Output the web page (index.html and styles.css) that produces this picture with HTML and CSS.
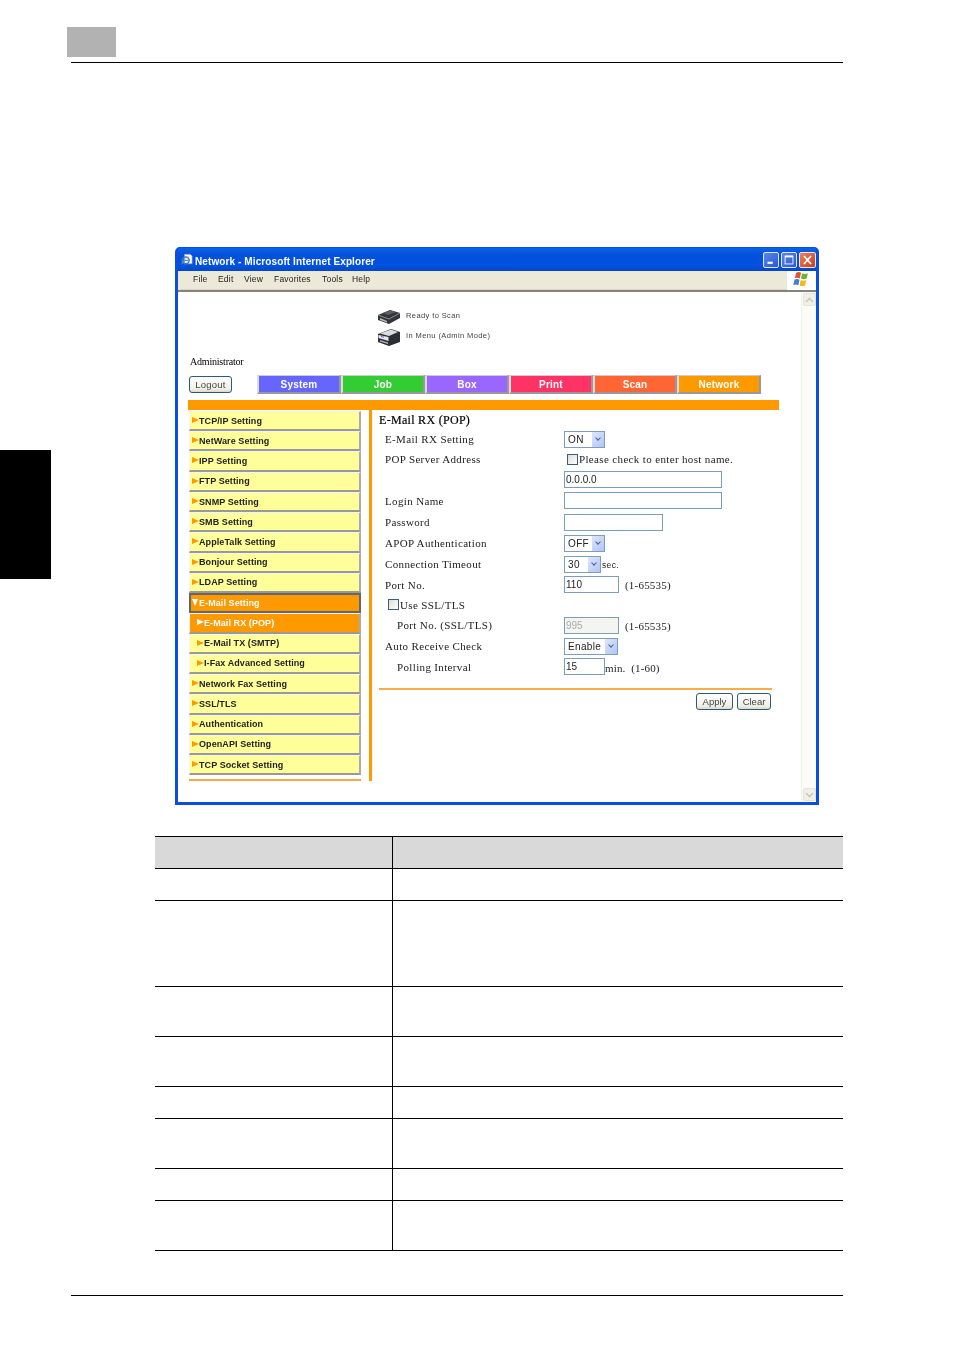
FILE: index.html
```html
<!DOCTYPE html>
<html lang="en">
<head>
  <meta charset="UTF-8">
  <title>E-Mail RX (POP)</title>
  <link rel="stylesheet" href="styles.css">
</head>
<body>

<header class="page-head">
  <div class="chapter-box"></div>
  <div class="rule"></div>
</header>

<div class="side-tab"></div>

<!-- Browser window -->
<div class="window">
  <div class="titlebar">
    <svg class="ie-icon" width="12" height="13" viewBox="0 0 14 14">
      <path d="M4 1h7l2 2v9H4z" fill="#fff" stroke="#8a96b0" stroke-width=".7"/>
      <circle cx="5.5" cy="8" r="4" fill="none" stroke="#2d7fd8" stroke-width="1.8"/>
      <path d="M2.5 8h6" stroke="#2d7fd8" stroke-width="1.2"/>
      <path d="M1 12c1-3 6-8 9-9" fill="none" stroke="#e8b030" stroke-width=".8"/>
    </svg>
    <span class="title-text">Network - Microsoft Internet Explorer</span>
    <div class="win-btns">
      <div class="win-btn"><svg width="16" height="16" viewBox="0 0 16 16"><rect x="4" y="10" width="6" height="2.4" fill="#fff"/></svg></div>
      <div class="win-btn"><svg width="16" height="16" viewBox="0 0 16 16"><rect x="3.5" y="3.5" width="9" height="9" fill="none" stroke="#fff"/><rect x="3.5" y="3" width="9" height="2" fill="#fff"/></svg></div>
      <div class="win-btn close"><svg width="17" height="16" viewBox="0 0 17 16"><path d="M4.5 3.5l8 9M12.5 3.5l-8 9" stroke="#fff" stroke-width="2"/></svg></div>
    </div>
  </div>

  <div class="menubar">
    <div class="menu-items">
      <span>File</span><span>Edit</span><span>View</span><span>Favorites</span><span>Tools</span><span>Help</span>
    </div>
    <div class="xp-logo">
      <svg width="17" height="16" viewBox="0 0 16 15">
        <path d="M3 1.5c2-1 3-.6 4.6.2L6.4 7C4.8 6.200 3.400 6 1.700 6.800z" fill="#e8502a"/>
        <path d="M8.700 2.100c1.700.8 3.200.8 5.300-.1L12.800 7c-2 .9-3.500.8-5.300 0z" fill="#6fb52c"/>
        <path d="M1.500 7.900c1.700-.8 3-.6 4.600.2L5 13.300c-1.700-.8-3-1-4.800-.2z" fill="#3a7fd8"/>
        <path d="M7.300 8.500c1.800.8 3.300.9 5.300 0l-1.200 5c-2 .9-3.500.8-5.300 0z" fill="#f2bb1d"/>
      </svg>
    </div>
  </div>

  <div class="viewport">
    <div class="content">
      <!-- Device status -->
      <div class="status">
        <div class="status-row">
          <svg width="24" height="18" viewBox="0 0 24 18">
            <path d="M1 7l12-5 10 3v5l-11 6-11-4z" fill="#33353a"/>
            <path d="M1 7l11 4 11-6" fill="none" stroke="#8b8e94"/>
            <path d="M3 10l7 3v1.500l-7-2.500z" fill="#b8bbc0"/>
            <path d="M6 5l8-2.500 5 1.500-8 3z" fill="#5b5e64"/>
          </svg>
          <span>Ready to Scan</span>
        </div>
        <div class="status-row">
          <svg width="24" height="18" viewBox="0 0 24 18">
            <path d="M1 6l13-5 9 3v10l-11 4-11-4z" fill="#2c2e33"/>
            <path d="M3 5.500l11-4 7 2.500-9 4z" fill="#d9dbdf"/>
            <path d="M1.500 7l10 2v4l-10-3z" fill="#e6e7ea"/>
            <path d="M4 8.500l3 .7" stroke="#5566dd" stroke-width="1"/>
            <path d="M3 12l8 2.500v1.500l-8-2.500z" fill="#aeb1b6"/>
          </svg>
          <span>In Menu (Admin Mode)</span>
        </div>
      </div>

      <div class="admin-label">Administrator</div>

      <nav class="nav-row">
        <button class="xp-btn logout">Logout</button>
        <div class="tabs">
          <div class="tab system">System</div>
          <div class="tab job">Job</div>
          <div class="tab box">Box</div>
          <div class="tab print">Print</div>
          <div class="tab scan">Scan</div>
          <div class="tab network">Network</div>
        </div>
      </nav>

      <div class="orange-bar"></div>

      <div class="columns">
        <aside class="sidebar">
          <div class="side-item">TCP/IP Setting</div>
          <div class="side-item">NetWare Setting</div>
          <div class="side-item">IPP Setting</div>
          <div class="side-item">FTP Setting</div>
          <div class="side-item">SNMP Setting</div>
          <div class="side-item">SMB Setting</div>
          <div class="side-item">AppleTalk Setting</div>
          <div class="side-item">Bonjour Setting</div>
          <div class="side-item">LDAP Setting</div>
          <div class="side-item open">E-Mail Setting</div>
          <div class="side-item sub current">E-Mail RX (POP)</div>
          <div class="side-item sub">E-Mail TX (SMTP)</div>
          <div class="side-item sub">I-Fax Advanced Setting</div>
          <div class="side-item">Network Fax Setting</div>
          <div class="side-item">SSL/TLS</div>
          <div class="side-item">Authentication</div>
          <div class="side-item">OpenAPI Setting</div>
          <div class="side-item">TCP Socket Setting</div>
          <div class="side-end"></div>
        </aside>

        <main class="panel">
          <h2>E-Mail RX (POP)</h2>
          <div class="form-grid">
            <label>E-Mail RX Setting</label>
            <div><div class="select w41">ON<span class="arrow"></span></div></div>

            <label>POP Server Address</label>
            <div class="check-line"><span class="check"></span>Please check to enter host name.</div>

            <label></label>
            <div><input class="w158" type="text" value="0.0.0.0"></div>

            <label class="low">Login Name</label>
            <div><input class="w158" type="text"></div>

            <label>Password</label>
            <div><input class="w99" type="text"></div>

            <label>APOP Authentication</label>
            <div><div class="select w41">OFF<span class="arrow"></span></div></div>

            <label>Connection Timeout</label>
            <div class="inline"><div class="select w37">30<span class="arrow"></span></div><span class="unit">sec.</span></div>

            <label class="low">Port No.</label>
            <div class="inline"><input class="w55" type="text" value="110"><span class="range">(1-65535)</span></div>

            <label class="ssl-label"><span class="check"></span>Use SSL/TLS</label>
            <div></div>

            <label class="indent">Port No. (SSL/TLS)</label>
            <div class="inline"><input class="w55 off" type="text" value="995"><span class="range">(1-65535)</span></div>

            <label>Auto Receive Check</label>
            <div><div class="select w54">Enable<span class="arrow"></span></div></div>

            <label class="indent low">Polling Interval</label>
            <div class="inline"><input class="w41" type="text" value="15"><span class="min">min.&nbsp; (1-60)</span></div>
          </div>
          <div class="panel-rule"></div>
          <div class="panel-btns">
            <button class="xp-btn apply">Apply</button>
            <button class="xp-btn clear">Clear</button>
          </div>
        </main>
      </div>
    </div>

    <div class="scrollbar">
      <div class="sb-btn"><svg width="9" height="6" viewBox="0 0 9 6"><path d="M1 5l3.500-3.500L8 5" fill="none" stroke="#c9c9bd" stroke-width="1.600"/></svg></div>
      <div class="sb-btn"><svg width="9" height="6" viewBox="0 0 9 6"><path d="M1 1l3.500 3.500L8 1" fill="none" stroke="#c9c9bd" stroke-width="1.600"/></svg></div>
    </div>
  </div>
</div>

<!-- Description table (cells empty in the source) -->
<table class="desc">
  <tr class="h32 head"><td></td><td></td></tr>
  <tr class="h32"><td></td><td></td></tr>
  <tr class="h86"><td></td><td></td></tr>
  <tr class="h50"><td></td><td></td></tr>
  <tr class="h50"><td></td><td></td></tr>
  <tr class="h32"><td></td><td></td></tr>
  <tr class="h50"><td></td><td></td></tr>
  <tr class="h32"><td></td><td></td></tr>
  <tr class="h50"><td></td><td></td></tr>
</table>

<div class="foot-rule"></div>

</body>
</html>
```

FILE: styles.css
```css
body { margin: 0; background: #fff; font-family: "Liberation Sans", Arial, sans-serif; color: #000; }

/* page furniture */
.page-head { padding-top: 27px; }
.chapter-box { width: 49px; height: 30px; margin-left: 67px; background: #b2b2b2; }
.rule { height: 1px; margin: 5px 111px 0 71px; background: #000; }
.foot-rule { height: 1px; margin: 44px 111px 0 71px; background: #000; }
.side-tab { position: absolute; left: 0; top: 450px; width: 51px; height: 129px; background: #000; }

/* browser window */
.window { width: 644px; height: 558px; margin: 184px 0 0 175px; box-sizing: border-box; background: #0a50e0; border: solid #0a4fe0; border-width: 1px 3px 3px; border-radius: 5px 5px 0 0; display: flex; flex-direction: column; filter: blur(0.35px); }
.titlebar { height: 23px; display: flex; align-items: center; padding-left: 3px; background: linear-gradient(#0a62ea, #0450dc 30%, #0052e0 75%, #0347c8); }
.ie-icon { flex: none; margin-right: 2px; }
.title-text { margin: 4px 0 0 0; color: #fff; font-weight: bold; font-size: 10px; letter-spacing: 0.1px; }
.win-btns { margin-left: auto; display: flex; gap: 2px; }
.win-btn { width: 16px; height: 16px; box-sizing: border-box; border: 1px solid #dfe8fb; border-radius: 2px; background: linear-gradient(135deg, #5c87ea, #2a56d8); display: flex; align-items: center; justify-content: center; overflow: hidden; }
.win-btn.close { width: 17px; background: linear-gradient(135deg, #e8835e, #c9401a); }

.menubar { height: 19px; flex: none; padding-left: 2px; display: flex; background: #ece9d8; border-bottom: 2px solid #85837a; }
.menu-items { flex: 1; display: flex; align-items: center; font-size: 8.5px; letter-spacing: 0.2px; color: #222; padding: 0 0 2px 13px; border-bottom: 1px solid #d8d4c0; }
.menu-items span:nth-child(1) { width: 25px; }
.menu-items span:nth-child(2) { width: 26px; }
.menu-items span:nth-child(3) { width: 30px; }
.menu-items span:nth-child(4) { width: 48px; }
.menu-items span:nth-child(5) { width: 30px; }
.xp-logo { width: 29px; background: #fff; display: flex; justify-content: center; }

.viewport { flex: 1; display: flex; background: #fff; min-height: 0; padding-left: 1px; }
.content { flex: 1; }
.scrollbar { width: 15px; background: #fbfbf7; border-left: 1px solid #f2f2ec; display: flex; flex-direction: column; justify-content: space-between; padding: 1px 0; box-sizing: border-box; }
.sb-btn { height: 13px; width: 13px; margin-left: 1px; box-sizing: border-box; background: #f1f0e6; border: 1px solid #e4e3d8; border-radius: 2px; display: flex; align-items: center; justify-content: center; }

/* status block */
.status { margin-left: 198px; padding-top: 13px; }
.status-row { height: 20px; display: flex; align-items: center; gap: 5px; font-size: 7.5px; letter-spacing: 0.4px; color: #444; }
.status-row svg { margin-top: 4px; }
.admin-label { margin: 10px 0 0 11px; height: 13px; line-height: 13px; font-family: "Liberation Serif", serif; font-size: 10px; letter-spacing: -0.2px; }

.nav-row { margin: 7px 0 0 10px; height: 19px; display: flex; }
.xp-btn { padding: 0; box-sizing: border-box; font-family: "Liberation Sans", Arial, sans-serif; font-size: 9.5px; color: #444; background: linear-gradient(#fff, #f0efe6 80%, #dcd8c8); border: 1px solid #2d5a78; border-radius: 3px; }
.logout { width: 43px; height: 17px; margin-top: 1px; letter-spacing: 0.2px; }
.tabs { margin-left: 25px; display: flex; }
.tab { width: 84px; box-sizing: border-box; border: solid; border-width: 1px 2px 2px 2px; border-color: #ccc #999 #999 #ddd; color: #fff; font-weight: bold; font-size: 10px; letter-spacing: 0.2px; display: flex; align-items: center; justify-content: center; }
.system { background: #6666ff; }
.job { background: #33cc33; }
.box { background: #9966ff; }
.print { background: #ff3366; }
.scan { background: #ff6633; }
.network { background: #ff9900; }

.orange-bar { height: 10px; width: 591px; margin: 6px 0 0 9px; background: #ff9900; }

.columns { display: flex; margin-left: 10px; }

/* left menu */
.sidebar { width: 172px; padding-top: 1px; flex: none; }
.side-item { height: 20.235px; box-sizing: border-box; padding-left: 9px; position: relative; display: flex; align-items: center; background: #ffff99; border: solid; border-width: 1px 2px 2px 1px; border-color: #f4f4f4 #aaa #999 #f4f4f4; font-size: 9px; font-weight: bold; letter-spacing: 0.08px; color: #222; }
.side-item::before { content: ""; position: absolute; left: 2px; top: 5px; border-left: 7px solid #ff9900; border-top: 3.500px solid transparent; border-bottom: 3.500px solid transparent; }
.sub { padding-left: 14px; }
.sub::before { left: 7px; }
.open { background: #ff9900; color: #fff; border: 2px solid #666; padding-left: 8px; }
.open::before { left: 1px; top: 4px; border-top: 7px solid #fff; border-left: 3.500px solid transparent; border-right: 3.500px solid transparent; border-bottom: 0; }
.current { background: #ff9900; color: #fff; }
.current::before { border-left-color: #fff; }
.side-end { height: 2px; margin-top: 4px; background: #f8a840; }

/* right panel */
.panel { width: 393px; height: 371px; margin-left: 8px; padding-left: 7px; border-left: 3px solid #ff9900; font-family: "Liberation Serif", serif; font-size: 11px; color: #222; }
.panel h2 { margin: 0; height: 21px; line-height: 21px; font-size: 12px; font-weight: normal; letter-spacing: 0.3px; color: #000; -webkit-text-stroke: 0.2px #000; }
.form-grid { display: grid; grid-template-columns: 179px 1fr; grid-template-rows: 20px 20px 21px 22px 21px 21px 20px 21px 20px 21px 20px 22px; padding-left: 6px; letter-spacing: 0.35px; }
.form-grid label { display: flex; align-items: center; height: 15px; }
.form-grid .low { height: 17px; }
.form-grid .indent { padding-left: 12px; }
.ssl-label { padding-left: 3px; }
.inline { display: flex; align-items: flex-start; }
.check-line { display: flex; align-items: center; height: 16px; padding-left: 3px; }
.check { width: 9px; height: 9px; margin-right: 1px; flex: none; background: linear-gradient(135deg, #dcdcd6, #fff); border: 1px solid #3d5a78; }
.form-grid input { display: block; height: 17px; box-sizing: border-box; padding: 0 1px; border: 1px solid #7f9db9; font-family: "Liberation Sans", Arial, sans-serif; font-size: 10px; color: #222; outline: none; }
.w158 { width: 158px; }
.w99 { width: 99px; }
.w55 { width: 55px; }
.w41 { width: 41px; }
.form-grid .off { color: #aaa; background: #f4f4f0; }
.select { height: 17px; box-sizing: border-box; position: relative; padding-left: 3px; line-height: 15px; border: 1px solid #7f9db9; font-family: "Liberation Sans", Arial, sans-serif; font-size: 10px; color: #222; background: #fff; }
.select.w41 { width: 41px; }
.w37 { width: 37px; }
.w54 { width: 54px; }
.arrow { position: absolute; top: 0; right: 0; width: 12px; height: 15px; background: linear-gradient(135deg, #dce6fd, #b0c4f5); }
.arrow::after { content: ""; position: absolute; left: 3.500px; top: 3.500px; width: 3px; height: 3px; border: solid #4d6185; border-width: 0 1.500px 1.500px 0; transform: rotate(45deg); }
.unit { margin: 4px 0 0 1px; font-family: "Liberation Sans", Arial, sans-serif; font-size: 8.5px; }
.range { margin: 3px 0 0 6px; letter-spacing: 0.2px; }
.min { margin-top: 4px; letter-spacing: 0.15px; }
.panel-rule { height: 2px; margin-top: 8px; background: #f8ad4a; }
.panel-btns { display: flex; justify-content: flex-end; gap: 4px; margin: 3px 1px 0 0; }
.apply { width: 37px; height: 17px; }
.clear { width: 34px; height: 17px; }

/* table */
.desc { width: 688px; margin: 31px 0 0 155px; table-layout: fixed; border-collapse: collapse; }
.desc td { padding: 0; border-top: 1px solid #000; border-bottom: 1px solid #000; }
.desc td:first-child { width: 237px; border-right: 1px solid #000; }
.head td { background: #d9d9d9; }
.h32 { height: 32px; }
.h50 { height: 50px; }
.h86 { height: 86px; }
```
